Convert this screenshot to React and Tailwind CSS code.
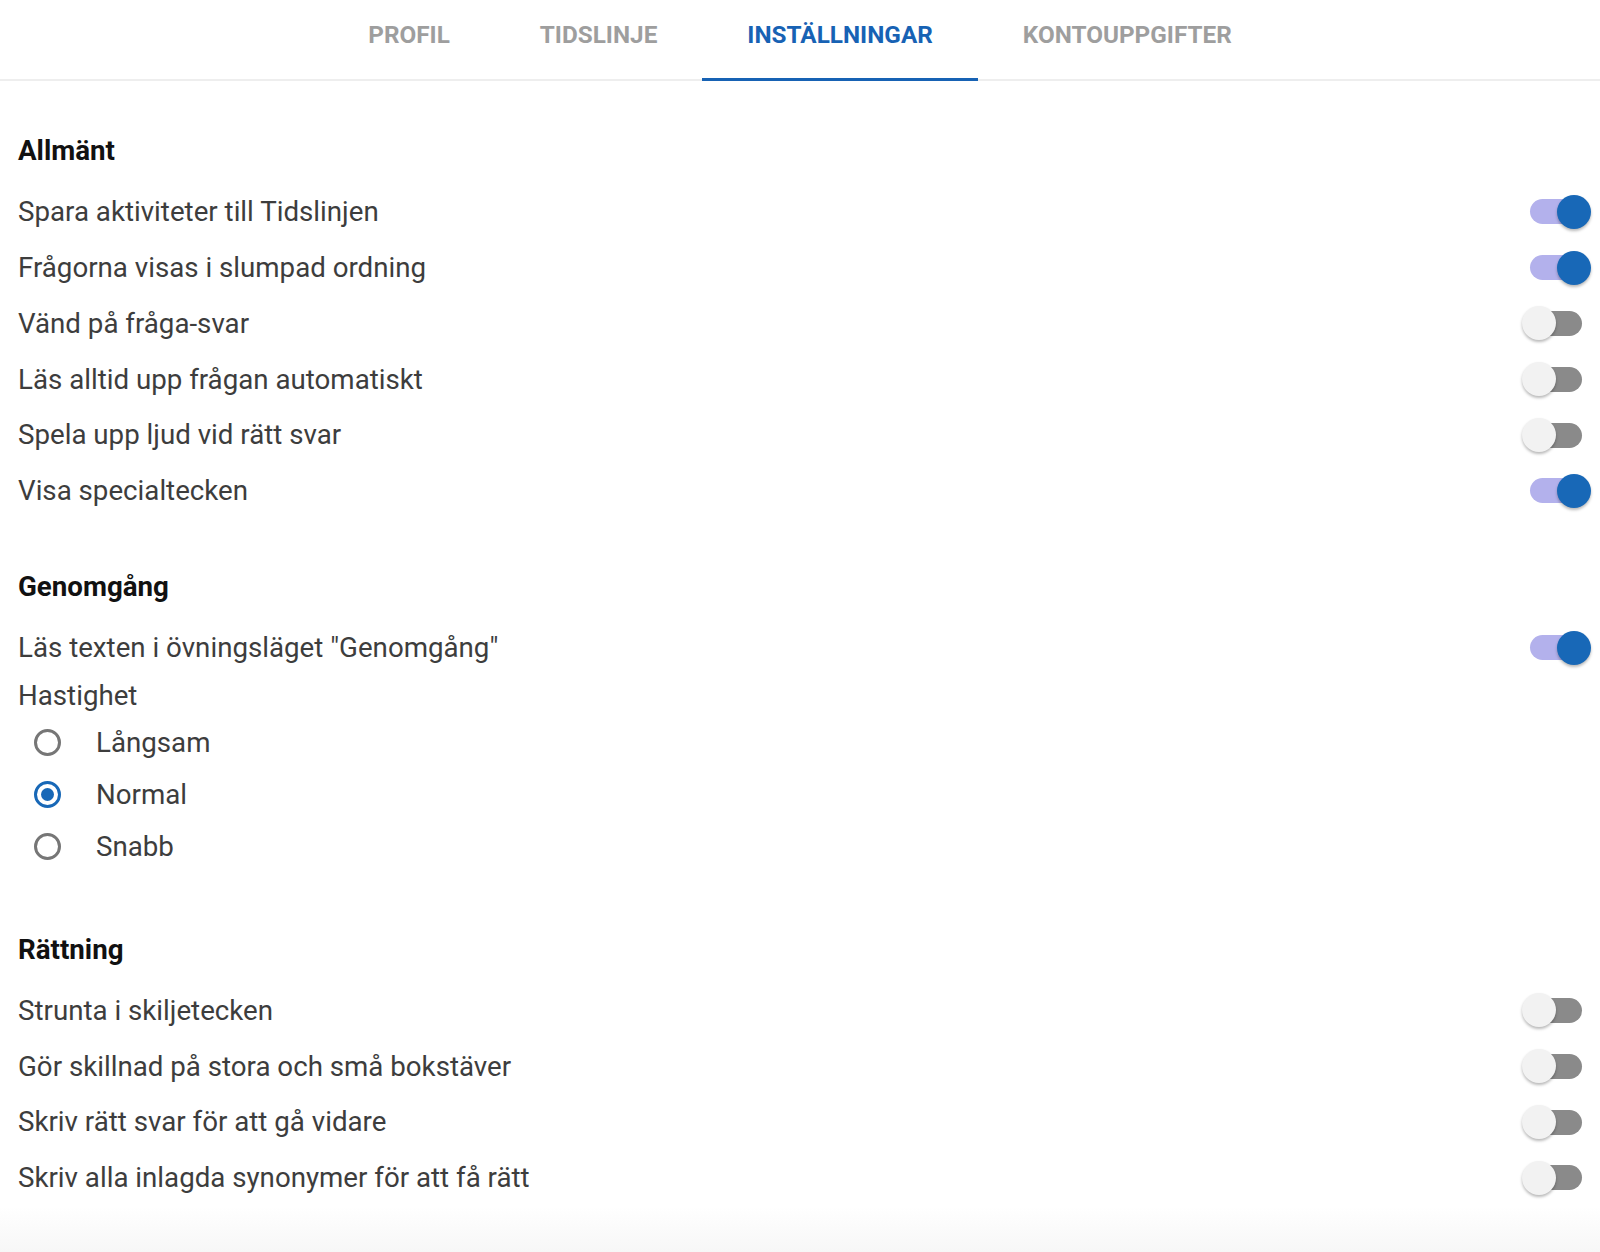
const tabs = ["PROFIL", "TIDSLINJE", "INSTÄLLNINGAR", "KONTOUPPGIFTER"];

const general = [
  ["Spara aktiviteter till Tidslinjen", true],
  ["Frågorna visas i slumpad ordning", true],
  ["Vänd på fråga-svar", false],
  ["Läs alltid upp frågan automatiskt", false],
  ["Spela upp ljud vid rätt svar", false],
  ["Visa specialtecken", true],
];

const correction = [
  ["Strunta i skiljetecken", false],
  ["Gör skillnad på stora och små bokstäver", false],
  ["Skriv rätt svar för att gå vidare", false],
  ["Skriv alla inlagda synonymer för att få rätt", false],
];

const Switch = ({ on }) => (
  <div
    className={`relative w-[52px] h-[25px] rounded-full ${
      on ? "bg-[#b3b1ec]" : "bg-[#8a8a8a]"
    }`}
  >
    <div
      className={`absolute top-[-4.5px] w-[34px] h-[34px] rounded-full shadow-[0_2px_3px_rgba(0,0,0,0.28)] ${
        on ? "left-[27px] bg-[#1868b7]" : "left-[-8px] bg-[#f2f2f2]"
      }`}
    />
  </div>
);

const Row = ({ label, on }) => (
  <div className="h-[55.8px] flex items-center justify-between">
    <span>{label}</span>
    <Switch on={on} />
  </div>
);

const Heading = ({ children, className }) => (
  <h2 className={`h-[56px] flex items-center font-bold text-[#111111] ${className}`}>
    {children}
  </h2>
);

const Radio = ({ label, checked }) => (
  <div className="h-[52px] flex items-center pl-[16px]">
    <span
      className={`w-[27px] h-[27px] rounded-full border-[3px] flex items-center justify-center ${
        checked ? "border-[#1868b7]" : "border-[#767676]"
      }`}
    >
      {checked && <span className="w-[13px] h-[13px] rounded-full bg-[#1868b7]" />}
    </span>
    <span className="ml-[35px]">{label}</span>
  </div>
);

export default function App() {
  return (
    <div className="bg-white font-['Roboto',sans-serif] text-[#3d3d3d]">
      <nav className="flex justify-center h-[81px] border-b-2 border-[#eeeeee]">
        {tabs.map((t) => (
          <div
            key={t}
            className={`px-[45px] -mb-[2px] pb-[8px] flex items-center text-[24.3px] font-bold ${
              t === "INSTÄLLNINGAR"
                ? "text-[#1762b4] border-b-[3px] border-[#1762b4]"
                : "text-[#9e9e9e] border-b-[3px] border-transparent"
            }`}
          >
            {t}
          </div>
        ))}
      </nav>

      <div className="px-[18px] text-[27.7px]">
        <section>
          <Heading className="mt-[42px]">Allmänt</Heading>
          <div className="mt-[5px]">
            {general.map(([label, on]) => (
              <Row key={label} label={label} on={on} />
            ))}
          </div>
        </section>

        <section>
          <Heading className="mt-[40px]">Genomgång</Heading>
          <div className="mt-[5px]">
            <Row label={'Läs texten i övningsläget "Genomgång"'} on />
          </div>
          <div className="h-[41px] flex items-center">Hastighet</div>
          <Radio label="Långsam" />
          <Radio label="Normal" checked />
          <Radio label="Snabb" />
        </section>

        <section>
          <Heading className="mt-[49px]">Rättning</Heading>
          <div className="mt-[5px]">
            {correction.map(([label, on]) => (
              <Row key={label} label={label} on={on} />
            ))}
          </div>
        </section>
      </div>

      <div className="h-[46px] bg-gradient-to-b from-white to-[#f7f7f7]" />
    </div>
  );
}
